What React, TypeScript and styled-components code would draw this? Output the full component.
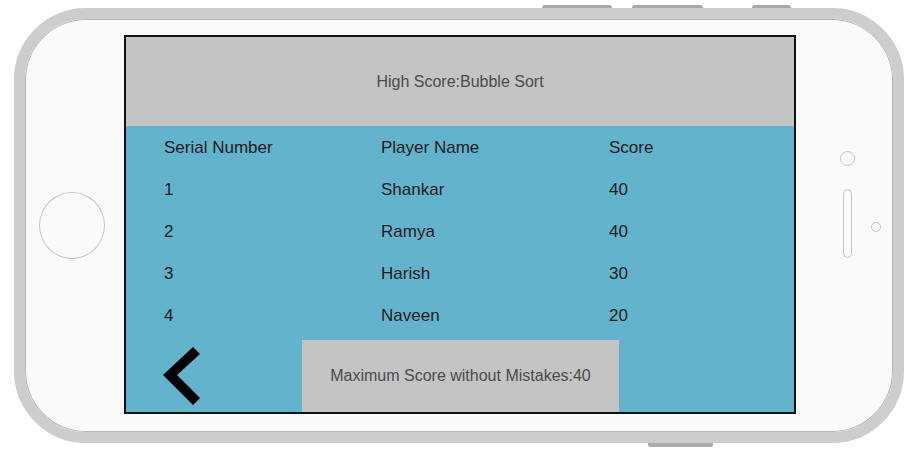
import React from "react";
import styled, { createGlobalStyle } from "styled-components";

const Global = createGlobalStyle`
  html, body { margin: 0; padding: 0; background: #ffffff; }
  body { font-family: "Liberation Sans", Arial, sans-serif; }
`;

const Page = styled.div`
  width: 914px;
  height: 460px;
  padding: 5px 0 0 14px;
  box-sizing: border-box;
  overflow: hidden;
`;

const SideButtons = styled.div`
  display: flex;
  height: 3px;
  padding-left: 528px;
`;

const SideButton = styled.div<{ $w: number; $ml: number }>`
  width: ${(p) => p.$w}px;
  height: 3px;
  margin-left: ${(p) => p.$ml}px;
  background: #a8a8a8;
  border-radius: 3px 3px 0 0;
`;

const BottomButtons = styled.div`
  display: flex;
  padding-left: 634px;
`;

const BottomButton = styled.div`
  width: 65px;
  height: 4px;
  background: #adadad;
  border-radius: 0 0 2px 2px;
`;

const Phone = styled.div`
  width: 890px;
  height: 435px;
  box-sizing: border-box;
  border: 11px solid #cdcdcd;
  border-radius: 72px;
  background: #fafafa;
  box-shadow: inset 0 0 0 1px #b4b4b4;
  display: flex;
  align-items: flex-start;
  padding: 16px 0 0 14px;
`;

const HomeButton = styled.div`
  width: 66px;
  height: 67px;
  margin-top: 157px;
  box-sizing: border-box;
  border-radius: 50%;
  border: 1px solid #c6c6c6;
  flex-shrink: 0;
`;

const Screen = styled.div`
  width: 672px;
  height: 379px;
  margin-left: 19px;
  box-sizing: border-box;
  border: 2px solid #111;
  display: flex;
  flex-direction: column;
  flex-shrink: 0;
`;

const Header = styled.div`
  height: 89px;
  background: #c4c4c4;
  display: flex;
  align-items: center;
  justify-content: center;
  font-size: 16px;
  color: #4a4a4a;
`;

const Body = styled.div`
  flex: 1;
  background: #63b3cd;
  display: flex;
  flex-direction: column;
  padding-top: 1px;
`;

const Row = styled.div`
  display: grid;
  grid-template-columns: 217px 228px 1fr;
  padding-left: 38px;
  height: 42px;
  align-items: center;
  font-size: 17px;
  color: #1c1c1c;
`;

const Footer = styled.div`
  margin-top: auto;
  height: 72px;
  display: flex;
  align-items: center;
  padding-left: 37px;
`;

const Back = styled.svg`
  width: 38px;
  height: 60px;
  flex-shrink: 0;
`;

const ScoreBox = styled.div`
  margin-left: 101px;
  width: 317px;
  align-self: stretch;
  background: #c4c4c4;
  display: flex;
  align-items: center;
  justify-content: center;
  font-size: 16px;
  color: #4a4a4a;
`;

const RightPanel = styled.div`
  display: flex;
  flex-direction: column;
  align-items: flex-start;
  padding: 116px 0 0 44px;
`;

const Sensor = styled.div<{ $d: number }>`
  width: ${(p) => p.$d}px;
  height: ${(p) => p.$d}px;
  box-sizing: border-box;
  border-radius: 50%;
  border: 1px solid #c6c6c6;
`;

const SpeakerRow = styled.div`
  display: flex;
  align-items: center;
  margin: 23px 0 0 3px;
  gap: 19px;
`;

const Speaker = styled.div`
  width: 9px;
  height: 69px;
  box-sizing: border-box;
  border: 1px solid #c6c6c6;
  border-radius: 5px;
`;

const SmallSensor = styled(Sensor)`
  margin-top: 7px;
`;

const rows = [
  ["Serial Number", "Player Name", "Score"],
  ["1", "Shankar", "40"],
  ["2", "Ramya", "40"],
  ["3", "Harish", "30"],
  ["4", "Naveen", "20"],
];

export default function App() {
  return (
    <>
      <Global />
      <Page>
        <SideButtons>
          <SideButton $w={70} $ml={0} />
          <SideButton $w={71} $ml={20} />
          <SideButton $w={39} $ml={49} />
        </SideButtons>
        <Phone>
          <HomeButton />
          <Screen>
            <Header>High Score:Bubble Sort</Header>
            <Body>
              {rows.map((r, i) => (
                <Row key={i}>
                  {r.map((c, j) => (
                    <span key={j}>{c}</span>
                  ))}
                </Row>
              ))}
              <Footer>
                <Back viewBox="0 0 38 60">
                  <polygon
                    points="0,29 30,1 37,8 14,29 37,52 30,59"
                    fill="#000"
                  />
                </Back>
                <ScoreBox>Maximum Score without Mistakes:40</ScoreBox>
              </Footer>
            </Body>
          </Screen>
          <RightPanel>
            <Sensor $d={15} />
            <SpeakerRow>
              <Speaker />
              <SmallSensor $d={10} />
            </SpeakerRow>
          </RightPanel>
        </Phone>
        <BottomButtons>
          <BottomButton />
        </BottomButtons>
      </Page>
    </>
  );
}
